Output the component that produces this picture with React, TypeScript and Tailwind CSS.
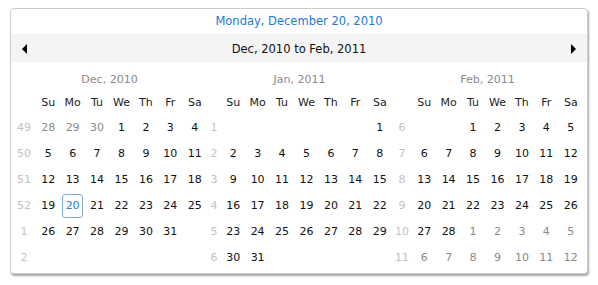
import React from "react";

type Cell = { d: number; other?: boolean };

interface MonthData {
  title: string;
  weeks: number[];
  rows: (Cell | null)[][];
  width: string;
  weekCol: string;
}

function range(a: number, b: number, other = false): Cell[] {
  const out: Cell[] = [];
  for (let i = a; i <= b; i++) out.push({ d: i, other });
  return out;
}

function chunk(cells: (Cell | null)[]): (Cell | null)[][] {
  const rows: (Cell | null)[][] = [];
  for (let i = 0; i < 42; i += 7) {
    const row = cells.slice(i, i + 7);
    while (row.length < 7) row.push(null);
    rows.push(row);
  }
  return rows;
}

const months: MonthData[] = [
  {
    title: "Dec, 2010",
    weeks: [49, 50, 51, 52, 1, 2],
    rows: chunk([...range(28, 30, true), ...range(1, 31)]),
    width: "w-[195px]",
    weekCol: "grid-cols-[24px_repeat(7,1fr)]",
  },
  {
    title: "Jan, 2011",
    weeks: [1, 2, 3, 4, 5, 6],
    rows: chunk([null, null, null, null, null, null, ...range(1, 31)]),
    width: "w-[185px]",
    weekCol: "grid-cols-[14px_repeat(7,1fr)]",
  },
  {
    title: "Feb, 2011",
    weeks: [6, 7, 8, 9, 10, 11],
    rows: chunk([null, null, ...range(1, 28), ...range(1, 12, true)]),
    width: "w-[191px]",
    weekCol: "grid-cols-[20px_repeat(7,1fr)]",
  },
];

const dayNames = ["Su", "Mo", "Tu", "We", "Th", "Fr", "Sa"];

function Month({ month, first }: { month: MonthData; first: boolean }) {
  return (
    <div className={`${month.width} shrink-0`}>
      <div className="h-6 flex items-center justify-center text-[#8a8a8a]">{month.title}</div>
      <div className={`grid ${month.weekCol} h-[23px] items-center text-center text-[#222]`}>
        <div />
        {dayNames.map((n) => (
          <div key={n}>{n}</div>
        ))}
      </div>
      {month.rows.map((row, ri) => (
        <div key={ri} className={`grid ${month.weekCol} h-[26px] items-center text-center`}>
          <div className="text-[#c2c2c2]">{month.weeks[ri]}</div>
          {row.map((cell, ci) => {
            if (!cell) return <div key={ci} />;
            const selected = first && !cell.other && cell.d === 20;
            if (selected) {
              return (
                <div key={ci} className="flex justify-center">
                  <span className="w-[21px] h-[24px] flex items-center justify-center rounded-[3px] border border-[#7ea6d6] text-[#2479d6]">
                    {cell.d}
                  </span>
                </div>
              );
            }
            return (
              <div key={ci} className={cell.other ? "text-[#8a8a8a]" : "text-[#111]"}>
                {cell.d}
              </div>
            );
          })}
        </div>
      ))}
    </div>
  );
}

export default function App() {
  return (
    <div className="w-[598px] h-[285px] bg-white pt-2 pl-[10px] font-['DejaVu_Sans',sans-serif] text-[11px]">
      <div className="w-[578px] h-[266px] border border-[#cdcdcd] rounded-[4px] bg-white shadow-[1px_2px_2px_rgba(0,0,0,0.35)] flex flex-col overflow-hidden">
        <div className="h-[25px] pt-px flex items-center justify-center text-[#2479d6] text-[11.5px]">
          Monday, December 20, 2010
        </div>
        <div className="h-[28px] bg-[#f4f4f4] flex items-center justify-between px-[11px]">
          <svg width="6" height="10" viewBox="0 0 6 10" className="mt-px">
            <polygon points="5,0 5,10 0,5" fill="#000" />
          </svg>
          <span className="pt-1 text-[#111] text-[11.5px]">Dec, 2010 to Feb, 2011</span>
          <svg width="6" height="10" viewBox="0 0 6 10" className="mt-px">
            <polygon points="1,0 1,10 6,5" fill="#000" />
          </svg>
        </div>
        <div className="flex pt-[6px] pl-px">
          {months.map((m, i) => (
            <Month key={m.title} month={m} first={i === 0} />
          ))}
        </div>
      </div>
    </div>
  );
}
